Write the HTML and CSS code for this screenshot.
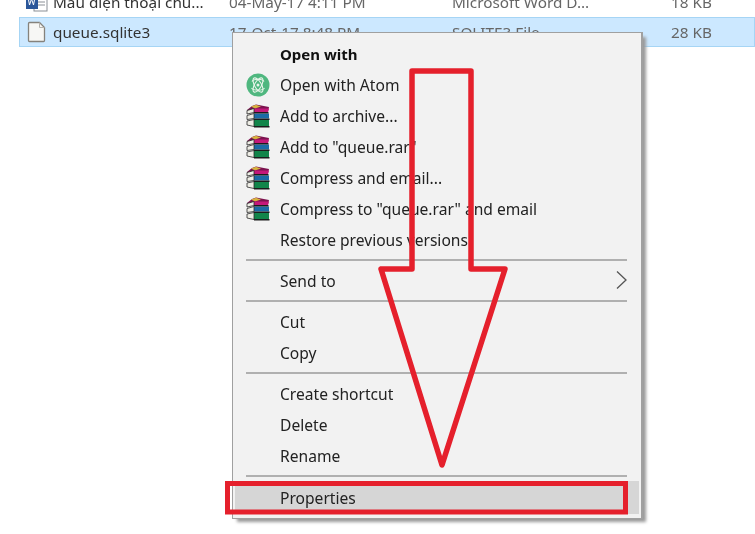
FILE: index.html
```html
<!DOCTYPE html>
<html lang="en">
<head>
<meta charset="utf-8">
<title>Properties</title>
<link rel="stylesheet" href="styles.css">
</head>
<body>
<svg class="defs" width="0" height="0" aria-hidden="true">
  <symbol id="rar" viewBox="0 0 24 24">
    <path d="M1 6 L6 2 L10 0.500 L23 3 L22 7.500 L8 7.500 L2 8.500Z" fill="#7d1250"/>
    <path d="M5 2.500 L10 0.800 L15 2.500 L9 4.500Z" fill="#d6b23e"/>
    <path d="M8 4.500 L23 4.500 L22 8 L8 8Z" fill="#c4187a"/>
    <path d="M1 6.500 L8 4.500 L8 8.500 L1 10Z" fill="#efeee6" stroke="#2a2a2a" stroke-width=".8"/>
    <path d="M8 9.500 L23 9.500 L23 14.500 L8 14.500Z" fill="#1b6aa6"/>
    <path d="M1 11.500 L8 9.500 L8 14.500 L1 15.500Z" fill="#efeee6" stroke="#2a2a2a" stroke-width=".8"/>
    <path d="M8 16 L23 16 L23 22 L8 22Z" fill="#12854a"/>
    <path d="M1 17 L8 15.500 L8 22.500 L1 21Z" fill="#efeee6" stroke="#2a2a2a" stroke-width=".8"/>
    <path d="M8 8.800 H22.500 M8 15.200 H23.500 M8 22.800 H23.500" stroke="#1c1c1c" stroke-width="1.400"/>
  </symbol>
</svg>

<section class="files">
  <div class="file">
    <svg class="file-icon" width="24" height="22" viewBox="0 0 24 22">
      <rect x="9" y="3" width="13" height="17" fill="#fff" stroke="#8a8f96"/>
      <path d="M12 8h8M12 11h8M12 14h8" stroke="#8a8f96"/>
      <rect x="1" y="3" width="12" height="15" fill="#2b579a"/>
      <path d="M3 6l1.500 8 2-6 2 6 1.500-8" fill="none" stroke="#fff"/>
    </svg>
    <span class="col-name">Mẫu điện thoại chủ...</span>
    <span class="col-date">04-May-17 4:11 PM</span>
    <span class="col-type">Microsoft Word D...</span>
    <span class="col-size">18 KB</span>
  </div>
  <div class="file selected">
    <svg class="file-icon" width="24" height="22" viewBox="0 0 24 22">
      <path d="M4.500 1.500h10l5 5v13a1 1 0 0 1-1 1h-14a1 1 0 0 1-1-1v-17a1 1 0 0 1 1-1z" fill="#f7f7f5" stroke="#85827c" stroke-width="1.300"/>
      <path d="M14.500 1.500v5h5" fill="none" stroke="#b5b3ae"/>
    </svg>
    <span class="col-name">queue.sqlite3</span>
    <span class="col-date">17-Oct-17 8:48 PM</span>
    <span class="col-type">SQLITE3 File</span>
    <span class="col-size">28 KB</span>
  </div>
</section>

<nav class="menu">
  <div class="item strong"><span class="slot"></span>Open with</div>
  <div class="item"><span class="slot">
    <svg width="24" height="24" viewBox="0 0 24 24">
      <circle cx="12" cy="12" r="11.500" fill="#4fb77f"/>
      <g fill="none" stroke="#e8f5ea" stroke-width="1.100">
        <ellipse cx="12" cy="12" rx="8" ry="3.400" transform="rotate(60 12 12)"/>
        <ellipse cx="12" cy="12" rx="8" ry="3.400" transform="rotate(-60 12 12)"/>
        <path d="M6 8.500c1.500-3 10.500-3 12 0M5.500 15c2 3 11 3 13 0"/>
      </g>
      <circle cx="12" cy="12" r="1.500" fill="#e8f5ea"/>
    </svg></span>Open with Atom</div>
  <div class="item"><span class="slot"><svg width="24" height="24"><use href="#rar"/></svg></span>Add to archive...</div>
  <div class="item"><span class="slot"><svg width="24" height="24"><use href="#rar"/></svg></span>Add to "queue.rar"</div>
  <div class="item"><span class="slot"><svg width="24" height="24"><use href="#rar"/></svg></span>Compress and email...</div>
  <div class="item"><span class="slot"><svg width="24" height="24"><use href="#rar"/></svg></span>Compress to "queue.rar" and email</div>
  <div class="item"><span class="slot"></span>Restore previous versions</div>
  <hr class="sep">
  <div class="item"><span class="slot"></span>Send to
    <svg class="chevron" width="11" height="18" viewBox="0 0 11 18"><path d="M1 .500 L10 9 L1 17.500" fill="none" stroke="#555" stroke-width="1.300"/></svg>
  </div>
  <hr class="sep">
  <div class="item"><span class="slot"></span>Cut</div>
  <div class="item"><span class="slot"></span>Copy</div>
  <hr class="sep">
  <div class="item"><span class="slot"></span>Create shortcut</div>
  <div class="item"><span class="slot"></span>Delete</div>
  <div class="item"><span class="slot"></span>Rename</div>
  <hr class="sep">
  <div class="item active"><span class="slot"></span>Properties</div>
</nav>

<svg class="marks" width="755" height="534" viewBox="0 0 755 534" aria-hidden="true">
  <path d="M412 71 H471 V269 H505 L442 465 L381 269 H412Z" fill="none" stroke="#e5202c" stroke-width="5.500" stroke-linejoin="round"/>
  <rect x="227.500" y="483.500" width="398" height="28.500" fill="none" stroke="#e5202c" stroke-width="5"/>
</svg>
</body>
</html>
```
FILE: styles.css
```css
* { box-sizing: border-box; }
html, body { margin: 0; height: 100%; }
body {
  position: relative;
  width: 755px;
  height: 534px;
  overflow: hidden;
  background: #fff;
  color: #333;
  font: 15.300px/20px "Noto Sans", "Open Sans", sans-serif;
  filter: blur(.5px);
}
.defs { position: absolute; }

.files { margin: -13px 0 0 19px; }
.file {
  display: flex;
  align-items: center;
  height: 30px;
  border: 1px solid transparent;
  color: #444;
}
.selected { background: #cce8ff; border-color: #a6d5f5; }
.file-icon { flex: none; margin-left: 5px; margin-right: 4px; }
.col-name { width: 176px; color: #333; flex: none; }
.col-date { width: 223px; flex: none; color: #666; }
.col-type { width: 217px; flex: none; color: #666; }
.col-size { width: 43px; flex: none; text-align: right; color: #666; }

.menu {
  position: absolute;
  left: 232px;
  top: 32px;
  width: 411px;
  height: 487px;
  padding: 5px 0 0 2px;
  background: #f2f2f2;
  border: 1px solid #a0a0a0;
  border-width: 1px 2px 1px 1px;
  box-shadow: 4px 4px 3px -1px #9a9a9a;
  color: #222;
  font-size: 15.600px;
}
.item {
  position: relative;
  display: flex;
  align-items: center;
  height: 31px;
  margin-right: 2px;
}
.strong { font-weight: 700; color: #111; font-size: 15px; }
.slot {
  flex: none;
  display: flex;
  align-items: center;
  width: 45px;
  padding-left: 11px;
}
.sep {
  height: 2px;
  margin: 4px 14px 4px 11px;
  border: 0;
  background: #b0b0b0;
}
.chevron { position: absolute; right: 12px; top: 6px; }
.active { background: #d6d6d6; height: 33px; }
.marks { position: absolute; left: 0; top: 0; }
```
